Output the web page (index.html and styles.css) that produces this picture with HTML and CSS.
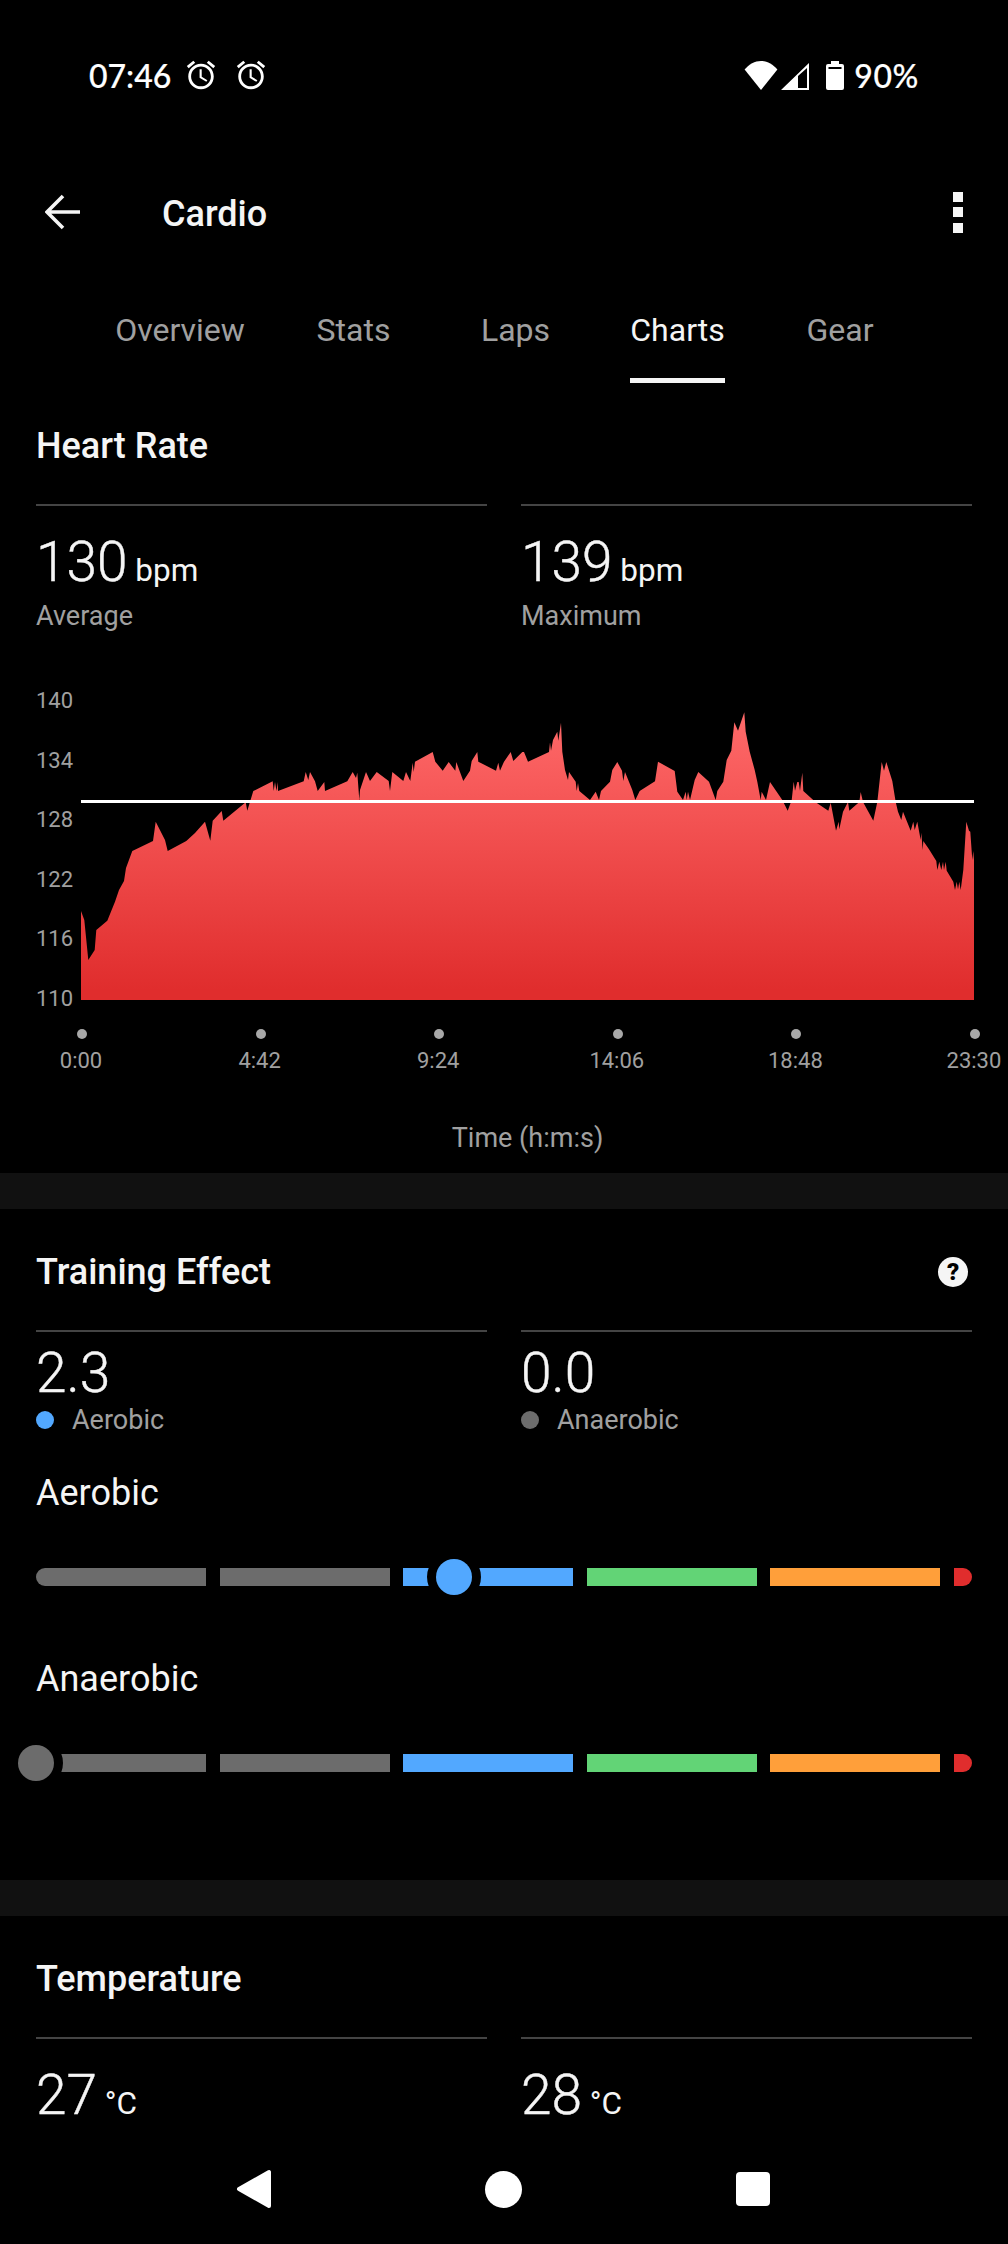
FILE: index.html
```html
<!DOCTYPE html>
<html>
<head>
    <meta charset="UTF-8">
    <title>Cardio</title>
    <link rel="stylesheet" href="styles.css">
</head>
<body>
<div class="screen">
    <div class="status-bar">
        <span class="clock">07:46</span>
        <svg class="alarm" viewBox="0 0 24 24"><path d="M22 5.72l-4.6-3.86-1.29 1.53 4.6 3.86L22 5.72zM7.88 3.39L6.6 1.86 2 5.71l1.29 1.53 4.59-3.85zM12.5 8H11v6l4.75 2.85.75-1.23-4-2.37V8zM12 4c-4.97 0-9 4.03-9 9s4.03 9 9 9 9-4.03 9-9-4.03-9-9-9zm0 16c-3.87 0-7-3.13-7-7s3.13-7 7-7 7 3.13 7 7-3.13 7-7 7z"/></svg>
        <svg class="alarm" viewBox="0 0 24 24"><path d="M22 5.72l-4.6-3.86-1.29 1.53 4.6 3.86L22 5.72zM7.88 3.39L6.6 1.86 2 5.71l1.29 1.53 4.59-3.85zM12.5 8H11v6l4.75 2.85.75-1.23-4-2.37V8zM12 4c-4.97 0-9 4.03-9 9s4.03 9 9 9 9-4.03 9-9-4.03-9-9-9zm0 16c-3.87 0-7-3.13-7-7s3.13-7 7-7 7 3.13 7 7-3.13 7-7 7z"/></svg>
        <div class="status-right">
            <svg class="wifi" viewBox="0 0 34 29"><path d="M17 29L.6 8.6C5 3.4 10.800 0 17 0s12 3.400 16.400 8.600z"/></svg>
            <svg class="signal" viewBox="0 0 28 27"><path fill-rule="evenodd" d="M28 0V27H0ZM17 13V25H26V5Z"/></svg>
            <svg class="battery" viewBox="0 0 18 29"><path d="M5 0h8v3h3a2 2 0 0 1 2 2v22a2 2 0 0 1-2 2H2a2 2 0 0 1-2-2V5a2 2 0 0 1 2-2h3z"/><rect class="battery-gap" x="2.500" y="6" width="13" height="2"/></svg>
            <span class="battery-text">90%</span>
        </div>
    </div>

    <div class="app-bar">
        <svg class="back" viewBox="0 0 36 36"><path d="M35 18H3M18 2L2 18l16 16" fill="none" stroke-width="3.600"/></svg>
        <h1 class="app-title">Cardio</h1>
        <div class="more"><i></i><i></i><i></i></div>
    </div>

    <div class="tabs">
        <span class="tab"><span>Overview</span></span>
        <span class="tab"><span>Stats</span></span>
        <span class="tab"><span>Laps</span></span>
        <span class="tab active"><span>Charts</span></span>
        <span class="tab"><span>Gear</span></span>
    </div>

    <div class="content">
        <section class="card card-chart">
            <h2 class="card-title">Heart Rate</h2>
            <div class="stats">
                <div class="stat">
                    <div class="stat-value">130<small> bpm</small></div>
                    <div class="stat-label">Average</div>
                </div>
                <div class="stat">
                    <div class="stat-value">139<small> bpm</small></div>
                    <div class="stat-label">Maximum</div>
                </div>
            </div>
            <div class="chart">
                <div class="y-axis">
                    <span>140</span><span>134</span><span>128</span><span>122</span><span>116</span><span>110</span>
                </div>
                <svg class="plot" viewBox="81 700 893 300">
                    <defs>
                        <linearGradient id="hrFill" gradientUnits="userSpaceOnUse" x1="0" y1="712" x2="0" y2="990">
                            <stop offset="0" stop-color="#ff6a6a"/>
                            <stop offset="1" stop-color="#e02d2d"/>
                        </linearGradient>
                    </defs>
                    <polygon fill="url(#hrFill)" points="81,911 84.300,920 88.300,960 94.700,950 96.300,930 107.300,920.700 115,901.700 119,890 124,881 126,868 132.300,851 153,841 155.700,821.700 165,840 167.700,851 186.300,841 195,833 205,821.700 210.300,840.700 212.700,820.700 221.700,811 223.300,820.700 245.700,802.300 247.300,810.700 253.300,791 272.700,781.300 273.700,791 275,782 276.500,791 277.700,782 278,791 303.700,781.300 305.700,772 308.300,780 310,772 315,781.300 317.700,791 324.300,782 325,791 347.300,781.300 352.700,772 356,778 357.300,772.700 359.300,800 360,790 366,772 370,781 376.700,772 388.700,781 390,791 392.300,772 403.300,781 406,772 410.300,781 412.700,762.700 413.700,772 415,761.700 432.700,752 435.300,761.700 442.700,770.700 448.700,762 455.300,770.700 456.300,762 463.300,781 470,770.700 471.700,761 477.300,752 478.300,761.700 496,770.700 498.300,762.700 500,770.700 504,761.700 510.700,752 513.300,761 522.300,752 524,752 528,761.700 549,752 550,742.300 551,750.700 553,740 557.300,731.700 558.300,740.700 561,722.700 562.300,751.700 565,770 568,780 569,772 575.700,781.700 576.700,791 578,783 579.300,791 590,800 595.700,791.700 599,800 601,791 610,781.700 612.300,770 617.300,762 622,770.700 623.300,781 625,772 632.300,790 635.300,800 639.700,791 655,781.300 658,761.700 674.700,771 677.300,791.700 683,800 685.700,791.700 686.700,800 688,791.700 690,800 694.700,780 698.300,772 709,781.700 715.700,800 717.300,791 723.300,781.700 726.700,760 731.300,750.700 734.300,722.300 738,730.700 744.300,712.300 745.700,731.700 749.700,751.700 754.700,770 757.300,781.700 760.700,800 761.700,791.700 766,800 770,782 782.300,800 787.700,810.700 791.700,800 793.700,781.700 795,790.700 797.300,782 798.700,782 800,790.700 802.300,772.700 803.300,791 815.700,802.300 828.300,810.700 830.700,802.700 836,830.700 838.700,821.700 839.300,829.300 843,811.700 848,802 849.300,810.700 859.300,802 860.700,792 863,802 873.300,820.700 877.300,802 881.700,762 884,770.700 886.300,762 892.300,781 895.700,802 898,811.700 901.300,820 903,811.700 910.700,830.700 913.300,821.700 914.700,830 917.300,821.700 920.700,840 921.300,832.700 922.700,850 923.300,841 929,849.300 936.300,861 937.300,870 939.300,861.700 941.300,870 943,861.700 944,870 945.700,861.700 946.700,870.700 953.300,881.700 955,890 956.700,881.700 958,889.300 959.300,881.700 960.700,890 963.300,870 966.300,821.700 969,830.700 970.300,831.700 972.300,860 973.300,851 974,860 974,1000 81,1000"/>
                    <rect class="avg-line" x="81" y="800" width="893" height="3"/>
                </svg>
            </div>
            <div class="x-axis">
                <div class="tick"><i></i><span>0:00</span></div>
                <div class="tick"><i></i><span>4:42</span></div>
                <div class="tick"><i></i><span>9:24</span></div>
                <div class="tick"><i></i><span>14:06</span></div>
                <div class="tick"><i></i><span>18:48</span></div>
                <div class="tick"><i></i><span>23:30</span></div>
            </div>
            <div class="x-title">Time (h:m:s)</div>
        </section>

        <section class="card card-effect">
            <div class="card-head">
                <h2 class="card-title">Training Effect</h2>
                <span class="help">?</span>
            </div>
            <div class="stats">
                <div class="stat stat-tight">
                    <div class="stat-value">2.3</div>
                    <div class="legend"><i class="dot dot-blue"></i>Aerobic</div>
                </div>
                <div class="stat stat-tight">
                    <div class="stat-value">0.0</div>
                    <div class="legend"><i class="dot dot-gray"></i>Anaerobic</div>
                </div>
            </div>

            <h3 class="scale-title">Aerobic</h3>
            <div class="scale">
                <i class="seg gray first"></i><i class="seg gray"></i><i class="seg blue"></i><i class="seg green"></i><i class="seg orange"></i><i class="seg red last"></i>
                <b class="thumb thumb-blue"></b>
            </div>

            <h3 class="scale-title scale-title-next">Anaerobic</h3>
            <div class="scale">
                <i class="seg gray first"></i><i class="seg gray"></i><i class="seg blue"></i><i class="seg green"></i><i class="seg orange"></i><i class="seg red last"></i>
                <b class="thumb thumb-gray"></b>
            </div>
        </section>

        <section class="card">
            <h2 class="card-title">Temperature</h2>
            <div class="stats">
                <div class="stat">
                    <div class="stat-value">27<small> °C</small></div>
                </div>
                <div class="stat">
                    <div class="stat-value">28<small> °C</small></div>
                </div>
            </div>
        </section>
    </div>

    <div class="nav-bar">
        <svg class="nav-back" viewBox="0 0 36 40"><path d="M3 20L33 3v34z" stroke-width="4" stroke-linejoin="round"/></svg>
        <span class="nav-home"></span>
        <span class="nav-recent"></span>
    </div>
</div>
</body>
</html>
```

FILE: styles.css
```css
* {
    box-sizing: border-box;
}

body {
    margin: 0;
    background: #000;
    color: #f5f5f5;
    font-family: Roboto, sans-serif;
}

.screen {
    width: 1008px;
    height: 2244px;
    display: flex;
    flex-direction: column;
    overflow: hidden;
    background: #000;
}

/* status bar */
.status-bar {
    height: 150px;
    flex: none;
    display: flex;
    align-items: center;
    padding: 0 89px 0 89px;
    font-family: Lato, sans-serif;
    font-size: 32px;
    font-weight: 500;
    color: #fff;
    -webkit-text-stroke: 0.2px #fff;
}

.clock {
    width: 95px;
}

.alarm {
    width: 34px;
    height: 34px;
    fill: #fff;
    margin-right: 16px;
}

.status-right {
    margin-left: auto;
    display: flex;
    align-items: center;
}

.wifi {
    width: 34px;
    height: 29px;
    fill: #fff;
}

.signal {
    width: 28px;
    height: 27px;
    fill: #fff;
    margin: 2px 17px 0 3px;
}

.battery {
    width: 18px;
    height: 29px;
    fill: #fff;
    margin-right: 10px;
}

.battery-gap {
    fill: #000;
}

.battery-text {
    letter-spacing: 0.6px;
}

/* app bar */
.app-bar {
    height: 124px;
    flex: none;
    display: flex;
    align-items: center;
    padding: 0 45px;
}

.back {
    width: 36px;
    height: 36px;
    stroke: #f5f5f5;
}

.app-title {
    margin: 3px 0 0 81px;
    font-size: 36px;
    font-weight: 500;
}

.more {
    margin-left: auto;
    display: flex;
    flex-direction: column;
    gap: 5.500px;
}

.more i {
    display: block;
    width: 10px;
    height: 10px;
    background: #f5f5f5;
}

/* tabs */
.tabs {
    flex: none;
    display: grid;
    grid-template-columns: 180px 167px 157px 167px 158px;
    padding-left: 90px;
    font-size: 32px;
    line-height: 40px;
    color: #a0a0a0;
    text-align: center;
}

.tab span {
    display: inline-block;
    padding: 36px 0 28px;
    border-bottom: 5px solid transparent;
}

.tab.active {
    color: #f5f5f5;
}

.tab.active span {
    border-bottom-color: #f5f5f5;
}

/* scrolling part */
.content {
    flex: 1;
    overflow: hidden;
}

.card {
    padding: 42px 36px 0;
}

.card-chart {
    padding-bottom: 19px;
    border-bottom: 36px solid #111;
}

.card-effect {
    padding-bottom: 108px;
    border-bottom: 36px solid #111;
}

.card-head {
    display: flex;
    justify-content: space-between;
    align-items: center;
}

.card-title {
    margin: 0;
    font-size: 36px;
    line-height: 42px;
    font-weight: 500;
}

.help {
    width: 30px;
    height: 30px;
    margin-right: 4px;
    border-radius: 50%;
    background: #f5f5f5;
    color: #000;
    font-size: 24px;
    font-weight: 900;
    line-height: 30px;
    text-align: center;
}

.stats {
    display: grid;
    grid-template-columns: 451px 451px;
    gap: 34px;
    margin-top: 37px;
}

.stat {
    border-top: 2px solid #444;
    padding-top: 25px;
}

.stat-tight {
    padding-top: 10px;
}

.stat-value {
    height: 60px;
    font-size: 55px;
    line-height: 62px;
    font-weight: 300;
    -webkit-text-stroke: 0.4px #f5f5f5;
}

.stat-value small {
    font-size: 31.500px;
    font-weight: 400;
    margin-left: 0;
    -webkit-text-stroke: 0;
}

.stat-label {
    margin-top: 9px;
    font-size: 27px;
    line-height: 32px;
    color: #a0a0a0;
}

.legend {
    display: flex;
    align-items: center;
    margin-top: 2px;
    font-size: 27px;
    line-height: 32px;
    color: #a0a0a0;
}

.dot {
    width: 18px;
    height: 18px;
    border-radius: 50%;
    margin-right: 18px;
}

.dot-blue {
    background: #52a8ff;
}

.dot-gray {
    background: #6c6c6c;
}

/* heart rate chart */
.chart {
    display: flex;
    align-items: flex-start;
    margin-top: 56px;
    margin-right: -2px;
}

.y-axis {
    width: 45px;
    height: 323px;
    padding-top: 1px;
    display: flex;
    flex-direction: column;
    justify-content: space-between;
    font-size: 22px;
    line-height: 24px;
    color: #a0a0a0;
}

.plot {
    display: block;
    width: 893px;
    height: 300px;
    margin-top: 12px;
}

.avg-line {
    fill: #fff;
}

.x-axis {
    display: flex;
    justify-content: space-between;
    margin: 18px -42px 0 5px;
}

.tick {
    width: 80px;
    display: flex;
    flex-direction: column;
    align-items: center;
    font-size: 22px;
    line-height: 24px;
    color: #a0a0a0;
}

.tick i {
    width: 10px;
    height: 10px;
    margin: 0 0 10px 2px;
    border-radius: 50%;
    background: #a8a8a8;
}

.x-title {
    margin: 49px -2px 0 45px;
    font-size: 27px;
    line-height: 32px;
    color: #a0a0a0;
    text-align: center;
}

/* training effect scales */
.scale-title {
    margin: 36px 0 0;
    font-size: 36px;
    line-height: 42px;
    font-weight: 400;
}

.scale-title-next {
    margin-top: 72px;
}

.scale {
    position: relative;
    display: flex;
    gap: 13.600px;
    margin-top: 54px;
}

.seg {
    flex: 1;
    height: 18px;
}

.seg.first {
    border-radius: 9px 0 0 9px;
}

.seg.last {
    flex: none;
    width: 18px;
    border-radius: 0 9px 9px 0;
}

.gray {
    background: #6c6c6c;
}

.blue {
    background: #52a8ff;
}

.green {
    background: #62d476;
}

.orange {
    background: #ff9f3a;
}

.red {
    background: #e02d2d;
}

.thumb {
    position: absolute;
    top: -9px;
    width: 36px;
    height: 36px;
    margin-left: -18px;
    border-radius: 50%;
    box-shadow: 0 0 0 9px #000;
}

.thumb-blue {
    left: 418px;
    background: #52a8ff;
}

.thumb-gray {
    left: 0;
    background: #6c6c6c;
}

/* system nav */
.nav-bar {
    flex: none;
    height: 110px;
    display: flex;
    align-items: center;
    padding-left: 236px;
}

.nav-back {
    width: 36px;
    height: 40px;
    fill: #fff;
    stroke: #fff;
}

.nav-home {
    width: 37px;
    height: 37px;
    margin-left: 213px;
    border-radius: 50%;
    background: #fff;
}

.nav-recent {
    width: 34px;
    height: 34px;
    margin-left: 214px;
    border-radius: 4px;
    background: #fff;
}
```
